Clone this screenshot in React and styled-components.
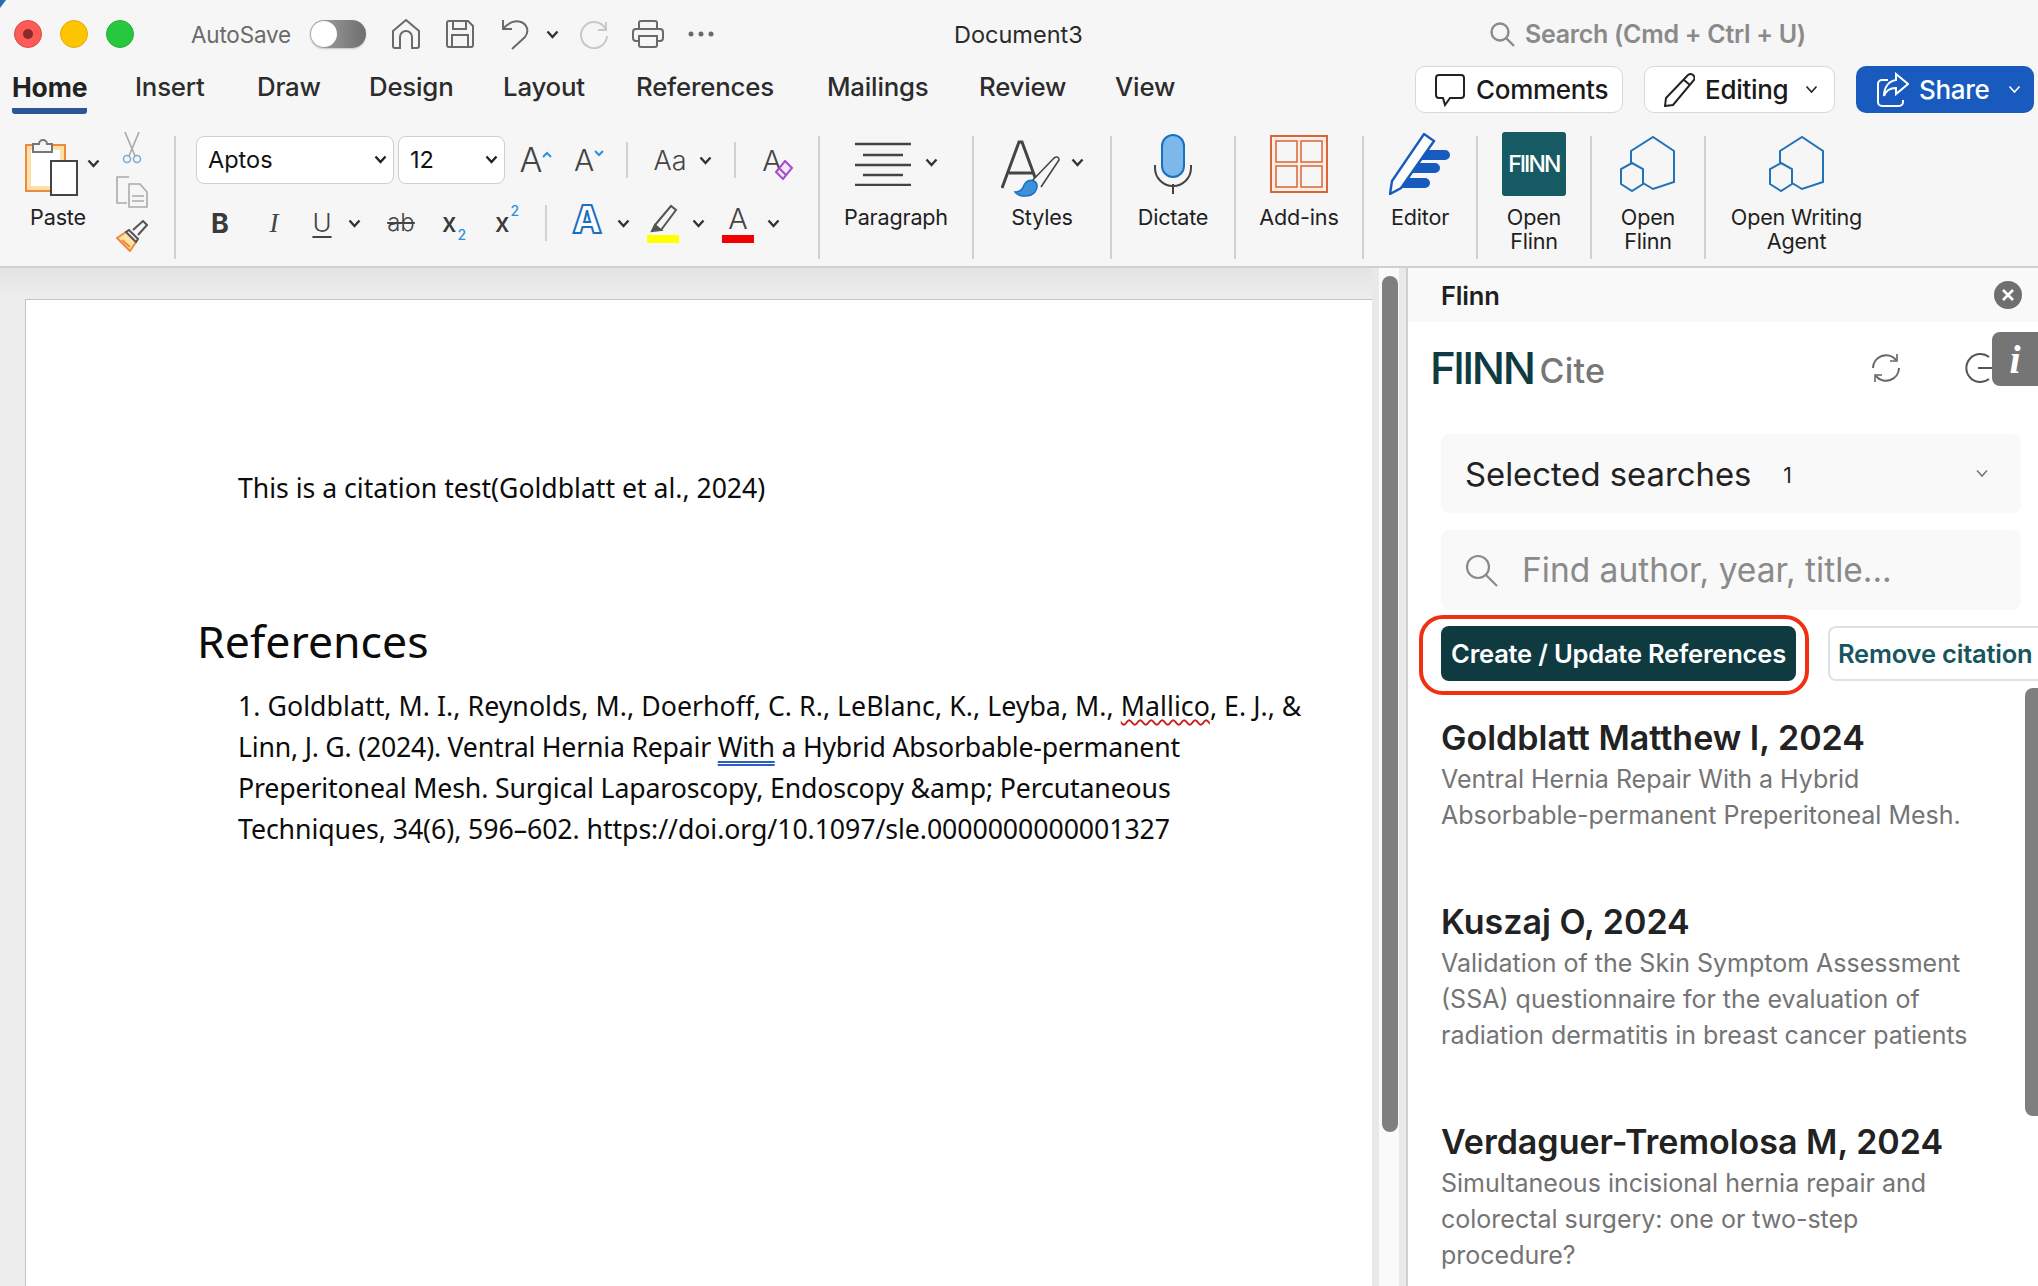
import styled, { createGlobalStyle } from "styled-components";

const GlobalStyle = createGlobalStyle`
  html, body {
    margin: 0;
    padding: 0;
    height: 100%;
    overflow: hidden;
    background: #f6f6f6;
  }
  * { box-sizing: border-box; }
`;

const Shell = styled.div`
  width: 2038px;
  height: 1286px;
  overflow: hidden;
  position: relative;
  font-family: Inter, "Liberation Sans", sans-serif;
  color: #1f1f1f;
  display: flex;
  flex-direction: column;
`;

const Corner = styled.div`
  position: absolute;
  left: 0;
  top: 0;
  width: 0;
  height: 0;
  border-top: 8px solid #2b6cb0;
  border-right: 6px solid transparent;
`;

/* title bar */
const TitleBar = styled.div`
  height: 60px;
  display: flex;
  align-items: center;
  padding: 8px 0 0 14px;
  background: #f6f6f6;
`;

const Light = styled.span`
  width: 28px;
  height: 28px;
  border-radius: 50%;
  margin-right: 18px;
  background: ${(p) => p.$color};
  border: 1px solid ${(p) => p.$edge};
  display: flex;
  align-items: center;
  justify-content: center;
  &::after {
    content: "";
    display: ${(p) => (p.$dot ? "block" : "none")};
    width: 10px;
    height: 10px;
    border-radius: 50%;
    background: #8a2a2a;
  }
`;

const AutoSave = styled.span`
  margin-left: 39px;
  font-size: 22.5px;
  color: #6a6a6a;
  letter-spacing: -0.2px;
  width: 100px;
  white-space: nowrap;
`;

const Toggle = styled.span`
  width: 56px;
  height: 28px;
  margin-left: 19px;
  border-radius: 14px;
  background: linear-gradient(90deg, #a8a8a8, #6e6e6e);
  display: flex;
  align-items: center;
  padding-left: 1px;
  box-shadow: 0 1px 2px rgba(0, 0, 0, 0.2);
  &::before {
    content: "";
    width: 26px;
    height: 26px;
    border-radius: 50%;
    background: #fff;
  }
`;

const Ico = styled.svg`
  display: block;
  flex: none;
  margin-left: ${(p) => p.$ml || 0}px;
  margin-top: ${(p) => p.$mt || 0}px;
`;

const DocTitle = styled.span`
  margin-left: 240px;
  font-size: 23.5px;
  color: #2a2a2a;
  width: 536px;
  white-space: nowrap;
`;

const SearchHint = styled.span`
  margin-left: 10px;
  font-size: 25px;
  font-weight: 600;
  color: #8a8a8a;
  white-space: nowrap;
  letter-spacing: -0.3px;
`;

/* tab row */
const TabRow = styled.div`
  height: 56px;
  display: flex;
  align-items: flex-start;
  padding-left: 12px;
  background: #f6f6f6;
`;

const Tab = styled.span`
  height: 54px;
  line-height: 54px;
  font-size: ${(p) => (p.$active ? 26.5 : 25.8)}px;
  font-weight: ${(p) => (p.$active ? 700 : 500)};
  color: ${(p) => (p.$active ? "#222" : "#2c2c2c")};
  width: ${(p) => p.$w}px;
  margin-right: ${(p) => p.$gap}px;
  white-space: nowrap;
  letter-spacing: -0.2px;
  border-bottom: ${(p) => (p.$active ? "6px solid #2b579a" : "6px solid transparent")};
  border-radius: 0 0 3px 3px;
`;

const TabActions = styled.div`
  margin-left: auto;
  display: flex;
  padding: 6px 4px 0 0;
  gap: 21px;
`;

const ActionButton = styled.div`
  height: 47px;
  width: ${(p) => p.$w}px;
  border-radius: 10px;
  background: ${(p) => (p.$primary ? "#185abd" : "#fff")};
  color: ${(p) => (p.$primary ? "#fff" : "#1a1a1a")};
  border: ${(p) => (p.$primary ? "none" : "1.5px solid #d8d8d8")};
  display: flex;
  align-items: center;
  padding-left: ${(p) => (p.$primary ? 21 : 18)}px;
  gap: 10px;
  font-size: 26px;
  font-weight: 500;
  letter-spacing: -0.3px;
`;

/* ribbon */
const Ribbon = styled.div`
  height: 152px;
  display: flex;
  padding-top: 20px;
  background: #f6f6f6;
  border-bottom: 2px solid #cfcfcf;
  align-items: flex-start;
`;

const Group = styled.div`
  width: ${(p) => p.$w}px;
  height: 123px;
  flex: none;
  display: flex;
  flex-direction: column;
  align-items: center;
  border-right: ${(p) => (p.$last ? "none" : "2px solid #d2d2d2")};
`;

const IconArea = styled.div`
  height: 69px;
  margin-top: -4px;
  display: flex;
  align-items: flex-start;
  flex: none;
`;

const RibbonLabel = styled.div`
  font-size: 21.6px;
  line-height: 24px;
  margin-top: 4px;
  color: #1f1f1f;
  text-align: center;
  white-space: pre-line;
  letter-spacing: -0.2px;
`;

const ClipboardGroup = styled.div`
  width: 176px;
  height: 123px;
  flex: none;
  display: flex;
  padding-left: 25px;
  border-right: 2px solid #d2d2d2;
`;

const PasteColumn = styled.div`
  width: 91px;
  display: flex;
  flex-direction: column;
`;

const PasteLabel = styled(RibbonLabel)`
  width: 66px;
  margin-top: 8px;
`;

const PasteIcon = styled.div`
  display: flex;
  height: 61px;
`;

const SmallTools = styled.div`
  display: flex;
  flex-direction: column;
  margin-top: -4px;
  gap: 12px;
`;

const FontGroup = styled.div`
  width: 644px;
  height: 123px;
  flex: none;
  padding-left: 20px;
  border-right: 2px solid #d2d2d2;
  display: flex;
  flex-direction: column;
  gap: 19px;
`;

const FontRow = styled.div`
  display: flex;
  align-items: center;
  height: ${(p) => p.$h}px;
`;

const Select = styled.div`
  height: 48px;
  width: ${(p) => p.$w}px;
  margin-right: 4px;
  background: #fff;
  border: 1.5px solid #cfcfcf;
  border-radius: 8px;
  display: flex;
  align-items: center;
  justify-content: space-between;
  padding: 0 6px 2px 11px;
  font-size: 23.5px;
  color: #111;
`;

const Tool = styled.span`
  flex: none;
  margin-left: ${(p) => p.$ml || 0}px;
  width: ${(p) => p.$w}px;
  display: flex;
  align-items: center;
  justify-content: center;
  font-size: ${(p) => p.$size || 26}px;
  font-weight: ${(p) => p.$weight || 400};
  font-style: ${(p) => (p.$italic ? "italic" : "normal")};
  font-family: ${(p) => (p.$serif ? '"Liberation Serif", serif' : "inherit")};
  color: ${(p) => p.$color || "#444"};
  text-decoration: ${(p) => p.$deco || "none"};
  text-decoration-thickness: 2px;
  text-underline-offset: 4px;
  line-height: 1;
  position: relative;
`;

const Script = styled.span`
  font-size: 14px;
  color: #2f8fd8;
  align-self: ${(p) => (p.$up ? "flex-start" : "flex-end")};
  margin: ${(p) => (p.$up ? "-6px 0 0 1px" : "0 0 -6px 1px")};
`;

const FontSep = styled.span`
  width: 2px;
  height: ${(p) => p.$h}px;
  background: #d2d2d2;
  flex: none;
  margin-left: ${(p) => p.$ml}px;
`;

const ColorTool = styled.span`
  width: 32px;
  flex: none;
  margin-left: ${(p) => p.$ml}px;
  display: flex;
  flex-direction: column;
  align-items: center;
  height: 40px;
`;

const ColorLetter = styled.span`
  font-size: ${(p) => (p.$outline ? 38 : 29)}px;
  line-height: 32px;
  height: 32px;
  font-weight: ${(p) => (p.$outline ? 800 : 300)};
  color: ${(p) => (p.$outline ? "#fff" : "#444")};
  -webkit-text-stroke: ${(p) => (p.$outline ? "2px #1a6fc0" : "0")};
`;

const ColorBar = styled.span`
  width: 32px;
  height: 8px;
  background: ${(p) => p.$color};
`;

const FlinnSquare = styled.div`
  width: 64px;
  height: 64px;
  background: #165a63;
  border-radius: 3px;
  display: flex;
  align-items: center;
  justify-content: center;
  color: #fff;
  font-size: 23px;
  font-weight: 500;
  letter-spacing: -1.8px;
`;

/* main */
const Main = styled.div`
  flex: 1;
  display: flex;
  min-height: 0;
`;

const DocArea = styled.div`
  width: 1406px;
  flex: none;
  display: flex;
  padding: 31px 0 0 25px;
  background: linear-gradient(180deg, #e4e4e4 0, #ededed 30px, #ededed 100%);
`;

const Page = styled.div`
  width: 1347px;
  flex: none;
  background: #fff;
  border-left: 1px solid #c4c4c4;
  border-top: 1px solid #c4c4c4;
  padding: 172px 0 0 171px;
  font-family: "Noto Sans", "Liberation Sans", sans-serif;
  color: #0c0c0c;
`;

const BodyLine = styled.div`
  margin-left: 41px;
  font-size: 26.6px;
  line-height: 32px;
`;

const Heading = styled.h1`
  margin: 110px 0 17px;
  font-size: 44.6px;
  line-height: 54px;
  font-weight: 400;
`;

const RefList = styled.div`
  margin-left: 41px;
  font-size: 26.7px;
  line-height: 41px;
  white-space: nowrap;
`;

const RefLine = styled.div`
  letter-spacing: ${(p) => p.$track}px;
`;

const Spell = styled.span`
  text-decoration: underline wavy #c8201a 1.5px;
  text-underline-offset: 3px;
`;

const Grammar = styled.span`
  text-decoration: underline double #2b5fc0 2px;
  text-underline-offset: 4px;
`;

const DocScroll = styled.div`
  width: 34px;
  flex: none;
  margin-top: -31px;
  padding: 8px 8px 0 10px;
  display: flex;
  justify-content: center;
  background: linear-gradient(90deg, #e9e9e9 0 7px, #fafafa 7px 27px, #e9e9e9 27px);
`;

const DocThumb = styled.div`
  width: 16px;
  height: 856px;
  border-radius: 8px;
  background: #7f7f7f;
`;

const Panel = styled.div`
  flex: 1;
  min-width: 0;
  border-left: 2px solid #cfcfcf;
  background: #fff;
  position: relative;
  overflow: hidden;
`;

const PanelHead = styled.div`
  height: 54px;
  background: #f9f9f9;
  display: flex;
  align-items: center;
  justify-content: space-between;
  padding: 0 16px 0 33px;
  font-size: 25.5px;
  font-weight: 600;
  letter-spacing: -0.2px;
`;

const CloseDot = styled.span`
  width: 28px;
  height: 28px;
  border-radius: 50%;
  background: #6f6f6f;
  display: flex;
  align-items: center;
  justify-content: center;
`;

const LogoRow = styled.div`
  height: 92px;
  display: flex;
  align-items: center;
  padding-left: 22px;
`;

const LogoMark = styled.span`
  font-size: 44px;
  font-weight: 500;
  color: #0e3a40;
  letter-spacing: -2.4px;
  line-height: 1;
`;

const LogoCite = styled.span`
  margin-left: 6px;
  margin-top: 5px;
  font-size: 34px;
  font-weight: 500;
  color: #777;
  letter-spacing: 0.2px;
`;

const InfoTab = styled.div`
  position: absolute;
  right: 0;
  top: 64px;
  width: 46px;
  height: 54px;
  border-radius: 8px 0 0 8px;
  background: #757575;
  color: #fff;
  font-family: "Liberation Serif", serif;
  font-style: italic;
  font-weight: 700;
  font-size: 40px;
  display: flex;
  align-items: center;
  justify-content: center;
`;

const FieldBox = styled.div`
  margin: ${(p) => p.$mt}px 17px 0 33px;
  height: ${(p) => p.$h}px;
  background: #f9f9f9;
  border-radius: 8px;
  display: flex;
  align-items: center;
  padding-left: 24px;
  font-size: 32.8px;
  color: ${(p) => p.$color || "#222"};
`;

const Count = styled.span`
  margin: 4px 0 0 32px;
  font-size: 21px;
  flex: 1;
`;

const FieldHint = styled.span`
  margin-left: 24px;
  font-size: 33.5px;
  white-space: nowrap;
`;

const ActionRow = styled.div`
  margin-top: 5px;
  padding-left: 11px;
  display: flex;
  align-items: flex-start;
  white-space: nowrap;
`;

const Highlight = styled.div`
  width: 390px;
  height: 80px;
  flex: none;
  border: 4px solid #f03010;
  border-radius: 24px;
  padding: 7px 0 0 18px;
`;

const PrimaryButton = styled.div`
  width: 355px;
  height: 55px;
  background: #0e3a40;
  border-radius: 8px;
  color: #fff;
  font-size: 25.5px;
  font-weight: 600;
  display: flex;
  align-items: center;
  justify-content: center;
  letter-spacing: -0.2px;
`;

const GhostButton = styled.div`
  margin: 11px 0 0 19px;
  width: 240px;
  height: 55px;
  flex: none;
  border: 2px solid #dde3e4;
  border-radius: 8px;
  color: #17565e;
  font-size: 25.5px;
  font-weight: 600;
  padding-left: 8px;
  display: flex;
  align-items: center;
  letter-spacing: -0.2px;
`;

const Results = styled.div`
  margin-top: 23px;
  padding-left: 33px;
  display: flex;
  flex-direction: column;
  gap: 69px;
`;

const ResultThumb = styled.div`
  position: absolute;
  right: 0;
  top: 420px;
  width: 13px;
  height: 428px;
  border-radius: 8px 0 0 8px;
  background: #7f7f7f;
`;

const ResultTitle = styled.div`
  font-size: 34px;
  line-height: 40px;
  font-weight: 600;
  color: #222;
  white-space: nowrap;
`;

const ResultText = styled.div`
  margin-top: 3px;
  font-size: 25px;
  line-height: 36px;
  color: #747474;
  white-space: pre-line;
`;

function Chevron({ ml = 0, mt = 0, w = 13, color = "#333", weight = 2.4 }) {
  return (
    <Ico $ml={ml} $mt={mt} width={w} height="9" viewBox="0 0 13 9" fill="none" stroke={color} strokeWidth={weight}>
      <path d="M1.5 1.5 6.5 7l5-5.5" />
    </Ico>
  );
}

function HexIcon() {
  return (
    <Ico $mt={4} width="56" height="56" viewBox="0 0 56 56" fill="none" stroke="#2272b8" strokeWidth="2">
      <path d="M11 27V15L33 1l21 14v31L33 53l-10-6" />
      <path d="M12 27l11 6v15l-11 7-11-7V33z" />
    </Ico>
  );
}

const tabs = [
  ["Home", 75, 48, true],
  ["Insert", 70, 52],
  ["Draw", 63, 49],
  ["Design", 85, 49],
  ["Layout", 82, 51],
  ["References", 140, 51],
  ["Mailings", 102, 50],
  ["Review", 87, 49],
  ["View", 60, 0],
];

const results = [
  {
    title: "Goldblatt Matthew I, 2024",
    text: "Ventral Hernia Repair With a Hybrid\nAbsorbable-permanent Preperitoneal Mesh.",
  },
  {
    title: "Kuszaj O, 2024",
    text: "Validation of the Skin Symptom Assessment\n(SSA) questionnaire for the evaluation of\nradiation dermatitis in breast cancer patients",
  },
  {
    title: "Verdaguer-Tremolosa M, 2024",
    text: "Simultaneous incisional hernia repair and\ncolorectal surgery: one or two-step\nprocedure?",
  },
];

export default function App() {
  return (
    <Shell>
      <GlobalStyle />
      <Corner />
      <TitleBar>
        <Light $color="#fc5b57" $edge="#e0443e" $dot />
        <Light $color="#fdc400" $edge="#e5ad00" />
        <Light $color="#27c840" $edge="#1fae34" />
        <AutoSave>AutoSave</AutoSave>
        <Toggle />
        <Ico $ml={26} width="28" height="30" viewBox="0 0 28 30" fill="none" stroke="#6a6a6a" strokeWidth="2">
          <path d="M1 12 14 1l13 11v15a2 2 0 0 1-2 2h-5V18a6 6 0 0 0-12 0v11H3a2 2 0 0 1-2-2z" />
        </Ico>
        <Ico $ml={26} width="28" height="28" viewBox="0 0 28 28" fill="none" stroke="#6a6a6a" strokeWidth="2">
          <path d="M3 1h19l5 5v19a2 2 0 0 1-2 2H3a2 2 0 0 1-2-2V3a2 2 0 0 1 2-2z" />
          <path d="M7 1v8h13V1M6 27V15h16v12" />
        </Ico>
        <Ico $ml={27} width="28" height="32" viewBox="0 0 28 32" fill="none" stroke="#6a6a6a" strokeWidth="2">
          <path d="M2 2v9h9M2 11C8 4 14 2 20 4c7 3 8 10 4 15L11 31" />
        </Ico>
        <Chevron ml={17} />
        <Ico $ml={21} width="28" height="30" viewBox="0 0 28 30" fill="none" stroke="#c8c8c8" strokeWidth="2">
          <path d="M26 3v8h-8M26 11A13 13 0 1 0 27 17" />
        </Ico>
        <Ico $ml={24} width="32" height="28" viewBox="0 0 32 28" fill="none" stroke="#6a6a6a" strokeWidth="2">
          <path d="M7 9V3a2 2 0 0 1 2-2h14a2 2 0 0 1 2 2v6" />
          <path d="M7 21H4a3 3 0 0 1-3-3v-6a3 3 0 0 1 3-3h24a3 3 0 0 1 3 3v6a3 3 0 0 1-3 3h-3" />
          <path d="M7 16h18v9a2 2 0 0 1-2 2H9a2 2 0 0 1-2-2z" />
        </Ico>
        <Ico $ml={24} width="26" height="6" viewBox="0 0 26 6" fill="#6a6a6a">
          <circle cx="3" cy="3" r="2.5" />
          <circle cx="13" cy="3" r="2.5" />
          <circle cx="23" cy="3" r="2.5" />
        </Ico>
        <DocTitle>Document3</DocTitle>
        <Ico width="25" height="25" viewBox="0 0 25 25" fill="none" stroke="#8a8a8a" strokeWidth="2.4">
          <circle cx="10" cy="10" r="8.5" />
          <path d="m16 16 8 8" />
        </Ico>
        <SearchHint>Search (Cmd + Ctrl + U)</SearchHint>
      </TitleBar>

      <TabRow>
        {tabs.map(([name, w, gap, active]) => (
          <Tab key={name} $w={w} $gap={gap} $active={active}>
            {name}
          </Tab>
        ))}
        <TabActions>
          <ActionButton $w={208}>
            <Ico width="32" height="34" viewBox="0 0 32 34" fill="none" stroke="#222" strokeWidth="2">
              <path d="M5 2h22a3 3 0 0 1 3 3v17a3 3 0 0 1-3 3H16l-5 7-2-7H5a3 3 0 0 1-3-3V5a3 3 0 0 1 3-3z" />
            </Ico>
            Comments
          </ActionButton>
          <ActionButton $w={191}>
            <Ico width="32" height="34" viewBox="0 0 32 34" fill="none" stroke="#222" strokeWidth="2">
              <path d="M25 2a4 4 0 0 1 6 5L10 32l-8 1 1-8zM21 7l6 5" />
            </Ico>
            Editing
            <Chevron ml={5} w={17} color="#222" weight={1.6} />
          </ActionButton>
          <ActionButton $w={178} $primary>
            <Ico width="32" height="36" viewBox="0 0 32 36" fill="none" stroke="#fff" strokeWidth="2">
              <path d="M11 8H5a4 4 0 0 0-4 4v18a4 4 0 0 0 4 4h17a4 4 0 0 0 4-4v-2" />
              <path d="M19 2l12 10-12 10v-6c-6 0-10 2-12 8 0-9 5-15 12-16z" />
            </Ico>
            Share
            <Chevron ml={6} w={17} color="#fff" weight={1.6} />
          </ActionButton>
        </TabActions>
      </TabRow>

      <Ribbon>
        <ClipboardGroup>
          <PasteColumn>
            <PasteIcon>
              <Ico width="53" height="60" viewBox="0 0 53 60" fill="none">
                <rect x="1" y="9" width="39" height="46" fill="#fce2a8" stroke="#ee8b3a" strokeWidth="2" />
                <rect x="6" y="14" width="29" height="36" fill="#fff" />
                <path d="M8 8h6a4 4 0 0 1 8 0h5v8H8z" fill="#f6f6f6" stroke="#777" strokeWidth="2" />
                <rect x="26" y="25" width="26" height="34" fill="#fff" stroke="#444" strokeWidth="2" />
              </Ico>
              <Chevron ml={9} mt={23} />
            </PasteIcon>
            <PasteLabel>Paste</PasteLabel>
          </PasteColumn>
          <SmallTools>
            <Ico $ml={6} width="20" height="32" viewBox="0 0 20 32" fill="none" stroke="#a8a8a8" strokeWidth="1.6">
              <path d="M3 0l10 24M17 0 7 24" />
              <circle cx="5" cy="27" r="3.5" stroke="#7fa8cf" />
              <circle cx="15" cy="27" r="3.5" stroke="#7fa8cf" />
            </Ico>
            <Ico width="32" height="32" viewBox="0 0 32 32" fill="none" stroke="#aaa" strokeWidth="1.6">
              <path d="M13 1H1v26h10" />
              <path d="M13 8h11l7 8v15H13zM16 20h12M16 25h12" />
            </Ico>
            <Ico width="32" height="32" viewBox="0 0 32 32" fill="none" stroke="#ee8b3a" strokeWidth="2">
              <path d="M10 12 1 18l13 13 6-9z" fill="#fce2a8" />
              <path d="M6 20l8 7" />
              <path d="M10 12l3-2 9 9-2 3z" stroke="#555" fill="#f6f6f6" />
              <path d="M17 10 27 1l4 4-9 10" stroke="#555" />
            </Ico>
          </SmallTools>
        </ClipboardGroup>

        <FontGroup>
          <FontRow $h={48}>
            <Select $w={198}>
              Aptos
              <Chevron w={13} color="#222" />
            </Select>
            <Select $w={107}>
              12
              <Chevron w={13} color="#222" />
            </Select>
            <Tool $ml={11} $w={32} $size={34} $weight={300}>
              A
              <Ico $mt={-12} width="10" height="7" viewBox="0 0 10 7" fill="none" stroke="#2f8fd8" strokeWidth="2">
                <path d="M1 6 5 2l4 4" />
              </Ico>
            </Tool>
            <Tool $ml={22} $w={30} $size={30} $weight={300}>
              A
              <Ico $mt={-14} width="10" height="7" viewBox="0 0 10 7" fill="none" stroke="#2f8fd8" strokeWidth="2">
                <path d="M1 1l4 4 4-4" />
              </Ico>
            </Tool>
            <FontSep $h={36} $ml={22} />
            <Tool $ml={25} $w={34} $size={27} $weight={300}>
              Aa
            </Tool>
            <Chevron ml={12} />
            <FontSep $h={36} $ml={22} />
            <Tool $ml={20} $w={32} $size={29} $weight={300}>
              A
              <Ico width="20" height="20" viewBox="0 0 20 20" fill="#f3e6f8" stroke="#a64ac9" strokeWidth="2" style={{ position: "absolute", right: -5, bottom: -5 }}>
                <path d="M12 1l7 7-9 11-7-7z" />
                <path d="M6 8l7 7" />
              </Ico>
            </Tool>
          </FontRow>
          <FontRow $h={40}>
            <Tool $ml={12} $w={24} $size={27} $weight={700} $color="#3a3a3a">
              B
            </Tool>
            <Tool $ml={30} $w={24} $size={27} $italic $serif>
              I
            </Tool>
            <Tool $ml={24} $w={24} $size={26} $deco="underline" $weight={300}>
              U
            </Tool>
            <Chevron ml={14} />
            <Tool $ml={24} $w={32} $size={24} $deco="line-through" $weight={300}>
              ab
            </Tool>
            <Tool $ml={25} $w={24} $size={26} $weight={500} $color="#3a3a3a">
              x<Script>2</Script>
            </Tool>
            <Tool $ml={29} $w={24} $size={26} $weight={500} $color="#3a3a3a">
              x<Script $up>2</Script>
            </Tool>
            <FontSep $h={36} $ml={26} />
            <ColorTool $ml={24}>
              <ColorLetter $outline>A</ColorLetter>
            </ColorTool>
            <Chevron ml={14} />
            <ColorTool $ml={17}>
              <Ico width="32" height="32" viewBox="0 0 32 32" fill="none" stroke="#555" strokeWidth="2">
                <path d="M8 22 24 3l5 4-15 20H6z" fill="#f6f6f6" />
                <path d="M5 28l3-6 6 5z" fill="#555" />
              </Ico>
              <ColorBar $color="#ffff00" />
            </ColorTool>
            <Chevron ml={13} />
            <ColorTool $ml={17}>
              <ColorLetter>A</ColorLetter>
              <ColorBar $color="#f00000" />
            </ColorTool>
            <Chevron ml={13} />
          </FontRow>
        </FontGroup>

        <Group $w={154}>
          <IconArea>
            <Ico $mt={10} width="56" height="44" viewBox="0 0 56 44" fill="none" stroke="#444" strokeWidth="2.4">
              <path d="M0 2h56M8 13h40M0 23h56M8 33h40M0 43h56" />
            </Ico>
            <Chevron ml={14} mt={26} />
          </IconArea>
          <RibbonLabel>Paragraph</RibbonLabel>
        </Group>
        <Group $w={138}>
          <IconArea>
            <Ico $mt={8} width="60" height="58" viewBox="0 0 60 58" fill="none">
              <path d="M1 48 18 2h3l14 38M8 33h24" stroke="#444" strokeWidth="3" />
              <path d="M30 42 53 18c3-2 5-1 5 2L40 47" fill="#f6f6f6" stroke="#444" strokeWidth="1.6" />
              <path d="M14 52c5 0 8-3 9-7 2-4 6-6 10-4 4 2 4 7 1 11-4 5-15 6-20 0z" fill="#3c8fd8" stroke="#1a6fc0" strokeWidth="1.4" />
            </Ico>
            <Chevron ml={10} mt={26} />
          </IconArea>
          <RibbonLabel>Styles</RibbonLabel>
        </Group>
        <Group $w={124}>
          <IconArea>
            <Ico $mt={2} width="38" height="60" viewBox="0 0 38 60" fill="none">
              <rect x="8" y="1" width="22" height="42" rx="11" fill="#7db8ea" stroke="#1a6fc0" strokeWidth="2" />
              <path d="M1 31v3a18 18 0 0 0 36 0v-3M19 50v10" stroke="#444" strokeWidth="2" />
            </Ico>
          </IconArea>
          <RibbonLabel>Dictate</RibbonLabel>
        </Group>
        <Group $w={128}>
          <IconArea>
            <Ico $mt={3} width="58" height="58" viewBox="0 0 58 58" fill="#fbeee6" stroke="#d9653a" strokeWidth="2">
              <rect x="1" y="1" width="56" height="56" />
              <rect x="6" y="6" width="21" height="21" fill="#f6f6f6" strokeWidth="1.5" />
              <rect x="31" y="6" width="21" height="21" fill="#f6f6f6" strokeWidth="1.5" />
              <rect x="6" y="31" width="21" height="21" fill="#f6f6f6" strokeWidth="1.5" />
              <rect x="31" y="31" width="21" height="21" fill="#f6f6f6" strokeWidth="1.5" />
            </Ico>
          </IconArea>
          <RibbonLabel>Add-ins</RibbonLabel>
        </Group>
        <Group $w={114}>
          <IconArea>
            <Ico $mt={1} width="62" height="62" viewBox="0 0 62 62" fill="none">
              <path d="M25 17h31a5 5 0 0 1 0 10H19zM17 30h29a5 5 0 0 1 0 10H11zM9 45h27a5 5 0 0 1 0 10H5z" fill="#185abd" />
              <path d="M35 1l10 7-33 47-11 6 2-13z" fill="#fff" stroke="#185abd" strokeWidth="2.4" />
            </Ico>
          </IconArea>
          <RibbonLabel>Editor</RibbonLabel>
        </Group>
        <Group $w={114}>
          <IconArea>
            <FlinnSquare>FlINN</FlinnSquare>
          </IconArea>
          <RibbonLabel>{"Open\nFlinn"}</RibbonLabel>
        </Group>
        <Group $w={114}>
          <IconArea>
            <HexIcon />
          </IconArea>
          <RibbonLabel>{"Open\nFlinn"}</RibbonLabel>
        </Group>
        <Group $w={181} $last>
          <IconArea>
            <HexIcon />
          </IconArea>
          <RibbonLabel>{"Open Writing\nAgent"}</RibbonLabel>
        </Group>
      </Ribbon>

      <Main>
        <DocArea>
          <Page>
            <BodyLine>This is a citation test(Goldblatt et al., 2024)</BodyLine>
            <Heading>References</Heading>
            <RefList>
              <RefLine $track={0.05}>
                1. Goldblatt, M. I., Reynolds, M., Doerhoff, C. R., LeBlanc, K., Leyba, M., <Spell>Mallico</Spell>, E. J., &amp;
              </RefLine>
              <RefLine $track={-0.22}>
                Linn, J. G. (2024). Ventral Hernia Repair <Grammar>With</Grammar> a Hybrid Absorbable-permanent
              </RefLine>
              <RefLine $track={-0.14}>Preperitoneal Mesh. Surgical Laparoscopy, Endoscopy &amp;amp; Percutaneous</RefLine>
              <RefLine $track={-0.07}>Techniques, 34(6), 596–602. https://doi.org/10.1097/sle.0000000000001327</RefLine>
            </RefList>
          </Page>
          <DocScroll>
            <DocThumb />
          </DocScroll>
        </DocArea>

        <Panel>
          <PanelHead>
            Flinn
            <CloseDot>
              <Ico width="14" height="14" viewBox="0 0 14 14" fill="none" stroke="#fff" strokeWidth="2.6">
                <path d="m2 2 10 10M12 2 2 12" />
              </Ico>
            </CloseDot>
          </PanelHead>
          <LogoRow>
            <LogoMark>FlINN</LogoMark>
            <LogoCite>Cite</LogoCite>
            <Ico $ml={266} width="30" height="30" viewBox="0 0 30 30" fill="none" stroke="#666" strokeWidth="2">
              <path d="M2 15A13 13 0 0 1 25 7M28 15A13 13 0 0 1 5 23" />
              <path d="M26 1v7h-7M4 29v-7h7" strokeWidth="1.6" />
            </Ico>
            <Ico $ml={63} width="40" height="30" viewBox="0 0 40 30" fill="none" stroke="#555" strokeWidth="2">
              <path d="M25 4a14 14 0 1 0 0 22" />
              <path d="M14 15h24" />
            </Ico>
          </LogoRow>
          <InfoTab>i</InfoTab>
          <FieldBox $mt={20} $h={79}>
            Selected searches
            <Count>1</Count>
            <Chevron w={20} color="#777" weight={1.6} />
            <Ico $ml={28} width="1" height="1" />
          </FieldBox>
          <FieldBox $mt={17} $h={80} $color="#8a8a8a">
            <Ico width="33" height="33" viewBox="0 0 33 33" fill="none" stroke="#8a8a8a" strokeWidth="2.2">
              <circle cx="13" cy="13" r="11" />
              <path d="m21 21 11 11" />
            </Ico>
            <FieldHint>Find author, year, title...</FieldHint>
          </FieldBox>
          <ActionRow>
            <Highlight>
              <PrimaryButton>Create / Update References</PrimaryButton>
            </Highlight>
            <GhostButton>Remove citation</GhostButton>
          </ActionRow>
          <Results>
            {results.map((r) => (
              <div key={r.title}>
                <ResultTitle>{r.title}</ResultTitle>
                <ResultText>{r.text}</ResultText>
              </div>
            ))}
          </Results>
          <ResultThumb />
        </Panel>
      </Main>
    </Shell>
  );
}
